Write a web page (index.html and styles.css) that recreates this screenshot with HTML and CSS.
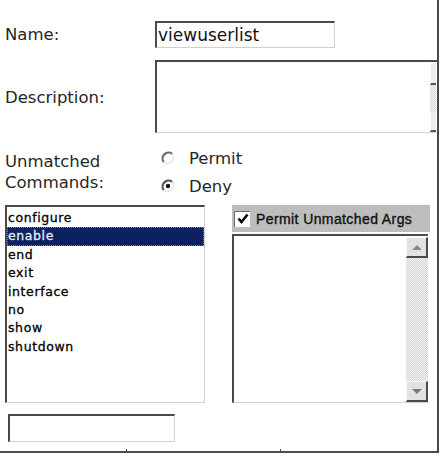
FILE: index.html
```html
<!DOCTYPE html>
<html lang="en">
<head>
  <meta charset="UTF-8">
  <title>Command Authorization Set</title>
  <link rel="stylesheet" href="styles.css">
</head>
<body>
  <div class="frame">
    <div class="row name-row">
      <label class="label">Name:</label>
      <div class="field name-field">viewuserlist</div>
    </div>

    <div class="row desc-row">
      <label class="label">Description:</label>
      <div class="field desc-field">
        <div class="desc-body"></div>
        <div class="desc-scroll">
          <div class="desc-btn up"></div>
          <div class="desc-track"></div>
          <div class="desc-btn down"></div>
        </div>
      </div>
    </div>

    <div class="row cmd-row">
      <div class="label two-line">Unmatched<br>Commands:</div>
      <div class="radios">
        <div class="radio">
          <svg width="14" height="14" viewBox="0 0 14 14">
            <path d="M11.2 2.8 A6 6 0 0 0 2.8 11.2" fill="none" stroke="#6e6e6e" stroke-width="2.2"/>
            <path d="M2.8 11.2 A6 6 0 0 0 11.2 2.8" fill="none" stroke="#e6e6e6" stroke-width="1.5"/>
          </svg>
          <span>Permit</span>
        </div>
        <div class="radio">
          <svg width="14" height="14" viewBox="0 0 14 14">
            <path d="M11.2 2.8 A6 6 0 0 0 2.8 11.2" fill="none" stroke="#555" stroke-width="2.2"/>
            <path d="M2.8 11.2 A6 6 0 0 0 11.2 2.8" fill="none" stroke="#e6e6e6" stroke-width="1.5"/>
            <circle cx="7" cy="7" r="2.2" fill="#111"/>
          </svg>
          <span>Deny</span>
        </div>
      </div>
    </div>

    <div class="row lists-row">
      <div class="listbox">
        <div class="item">configure</div>
        <div class="item selected">enable</div>
        <div class="item">end</div>
        <div class="item">exit</div>
        <div class="item">interface</div>
        <div class="item">no</div>
        <div class="item">show</div>
        <div class="item">shutdown</div>
      </div>

      <div class="args">
        <div class="args-head">
          <div class="checkbox">
            <svg width="12" height="12" viewBox="0 0 12 12">
              <path d="M1.5 5.5 L4.5 9 L10.5 1.5" fill="none" stroke="#000" stroke-width="2.6"/>
            </svg>
          </div>
          <span>Permit Unmatched Args</span>
        </div>
        <div class="args-list">
          <div class="args-body"></div>
          <div class="scrollbar">
            <div class="sb-btn"><span class="arrow-up"></span></div>
            <div class="sb-track"></div>
            <div class="sb-btn"><span class="arrow-down"></span></div>
          </div>
        </div>
      </div>
    </div>

    <div class="row bottom-row">
      <div class="field bottom-field"></div>
    </div>

    <div class="ticks">
      <span class="tick first"></span>
      <span class="tick second"></span>
    </div>
  </div>
</body>
</html>
```

FILE: styles.css
```css
body {
  margin: 0;
  background: #fff;
  font-family: 'DejaVu Sans', Verdana, sans-serif;
  color: #1a1a1a;
  overflow: hidden;
}

.frame {
  width: 439px;
  height: 453px;
  box-sizing: border-box;
  border-right: 2px solid #4a4a4a;
  border-bottom: 2px solid #4a4a4a;
  overflow: hidden;
  display: flex;
  flex-direction: column;
}

.row {
  display: flex;
  padding-left: 5px;
}

.label {
  width: 150px;
  flex: none;
  font-size: 16.5px;
  color: #262626;
  display: flex;
  align-items: center;
}

.field {
  box-sizing: border-box;
  border-top: 2px solid #4a4a4a;
  border-left: 2px solid #4a4a4a;
  border-right: 1px solid #d0d0d0;
  border-bottom: 1px solid #d0d0d0;
  background: #fff;
}

.name-row {
  margin-top: 21px;
  height: 27px;
}

.name-field {
  width: 180px;
  font-size: 17px;
  line-height: 24px;
  padding-left: 1px;
  color: #111;
}

.desc-row {
  margin-top: 12px;
  height: 73px;
}

.desc-row .label {
  padding-top: 2px;
}

.desc-field {
  width: 290px;
  flex: none;
  display: flex;
  border-right: none;
}

.desc-body {
  width: 273px;
}

.desc-scroll {
  width: 6px;
  display: flex;
  flex-direction: column;
  padding-top: 1px;
}

.desc-btn {
  background: #ececec;
  border-left: 1px solid #fafafa;
  border-bottom: 2px solid #555;
}

.desc-btn.up { height: 20px; }
.desc-btn.down { height: 18px; }

.desc-track {
  flex: 1;
  background: repeating-conic-gradient(#d8d8d8 0 25%, #f4f4f4 0 50%) 0 0 / 2px 2px;
}

.cmd-row {
  margin-top: 17px;
  height: 46px;
}

.two-line {
  display: block;
  line-height: 21px;
  padding-top: 1px;
}

.radios {
  padding-left: 6px;
  font-size: 16.5px;
  color: #262626;
}

.radio {
  display: flex;
  align-items: center;
  height: 28px;
  margin-top: -6px;
}

.radio + .radio {
  margin-top: 0;
}

.radio svg {
  margin-right: 14px;
}

.lists-row {
  margin-top: 9px;
  height: 198px;
  align-items: flex-start;
}

.listbox {
  box-sizing: border-box;
  width: 200px;
  height: 198px;
  border-top: 2px solid #4a4a4a;
  border-left: 2px solid #4a4a4a;
  border-right: 1px solid #d0d0d0;
  border-bottom: 1px solid #d0d0d0;
  padding-top: 2px;
  font-size: 12.5px;
  letter-spacing: 0.6px;
  color: #000;
}

.item {
  height: 18.4px;
  line-height: 18px;
  padding-left: 1px;
  -webkit-text-stroke: 0.3px #000;
}

.item.selected {
  background: #0d2160;
  color: #e8ecf8;
  -webkit-text-stroke: 0.3px #e8ecf8;
  outline: 1px dotted #7a86a8;
  outline-offset: -1px;
}

.args {
  margin-left: 27px;
  width: 198px;
}

.args-head {
  height: 27px;
  background: #bdbdbd;
  display: flex;
  align-items: center;
  font-family: 'Liberation Sans', Arial, sans-serif;
  font-size: 14px;
  letter-spacing: 0.4px;
  color: #111;
  -webkit-text-stroke: 0.35px #111;
}

.checkbox {
  width: 16px;
  height: 16px;
  box-sizing: border-box;
  margin: 0 6px 0 2px;
  background: #fff;
  border-top: 1px solid #6a6a6a;
  border-left: 1px solid #6a6a6a;
  display: flex;
  align-items: center;
  justify-content: center;
}

.args-list {
  box-sizing: border-box;
  margin-top: 2px;
  width: 196px;
  height: 169px;
  border-top: 2px solid #4a4a4a;
  border-left: 2px solid #4a4a4a;
  border-bottom: 1px solid #d0d0d0;
  display: flex;
}

.args-body {
  flex: 1;
}

.scrollbar {
  width: 22px;
  display: flex;
  flex-direction: column;
  padding: 1px 0 0;
}

.sb-btn {
  box-sizing: border-box;
  height: 21px;
  background: #e2e2e2;
  border-top: 1px solid #f6f6f6;
  border-left: 1px solid #f6f6f6;
  border-right: 2px solid #4a4a4a;
  border-bottom: 2px solid #4a4a4a;
  display: flex;
  align-items: center;
  justify-content: center;
}

.arrow-up,
.arrow-down {
  width: 0;
  height: 0;
  border-left: 5px solid transparent;
  border-right: 5px solid transparent;
}

.arrow-up { border-bottom: 5px solid #8a8a8a; }
.arrow-down { border-top: 5px solid #7a7a7a; }

.sb-track {
  flex: 1;
  background: repeating-conic-gradient(#d6d6d6 0 25%, #f2f2f2 0 50%) 0 0 / 2px 2px;
}

.bottom-row {
  margin-top: 11px;
  padding-left: 8px;
}

.bottom-field {
  width: 167px;
  height: 28px;
}

.ticks {
  margin-top: auto;
  height: 2px;
  display: flex;
}

.tick {
  width: 1px;
  height: 2px;
  background: #4a4a4a;
}

.tick.first { margin-left: 126px; }
.tick.second { margin-left: 153px; }
```
